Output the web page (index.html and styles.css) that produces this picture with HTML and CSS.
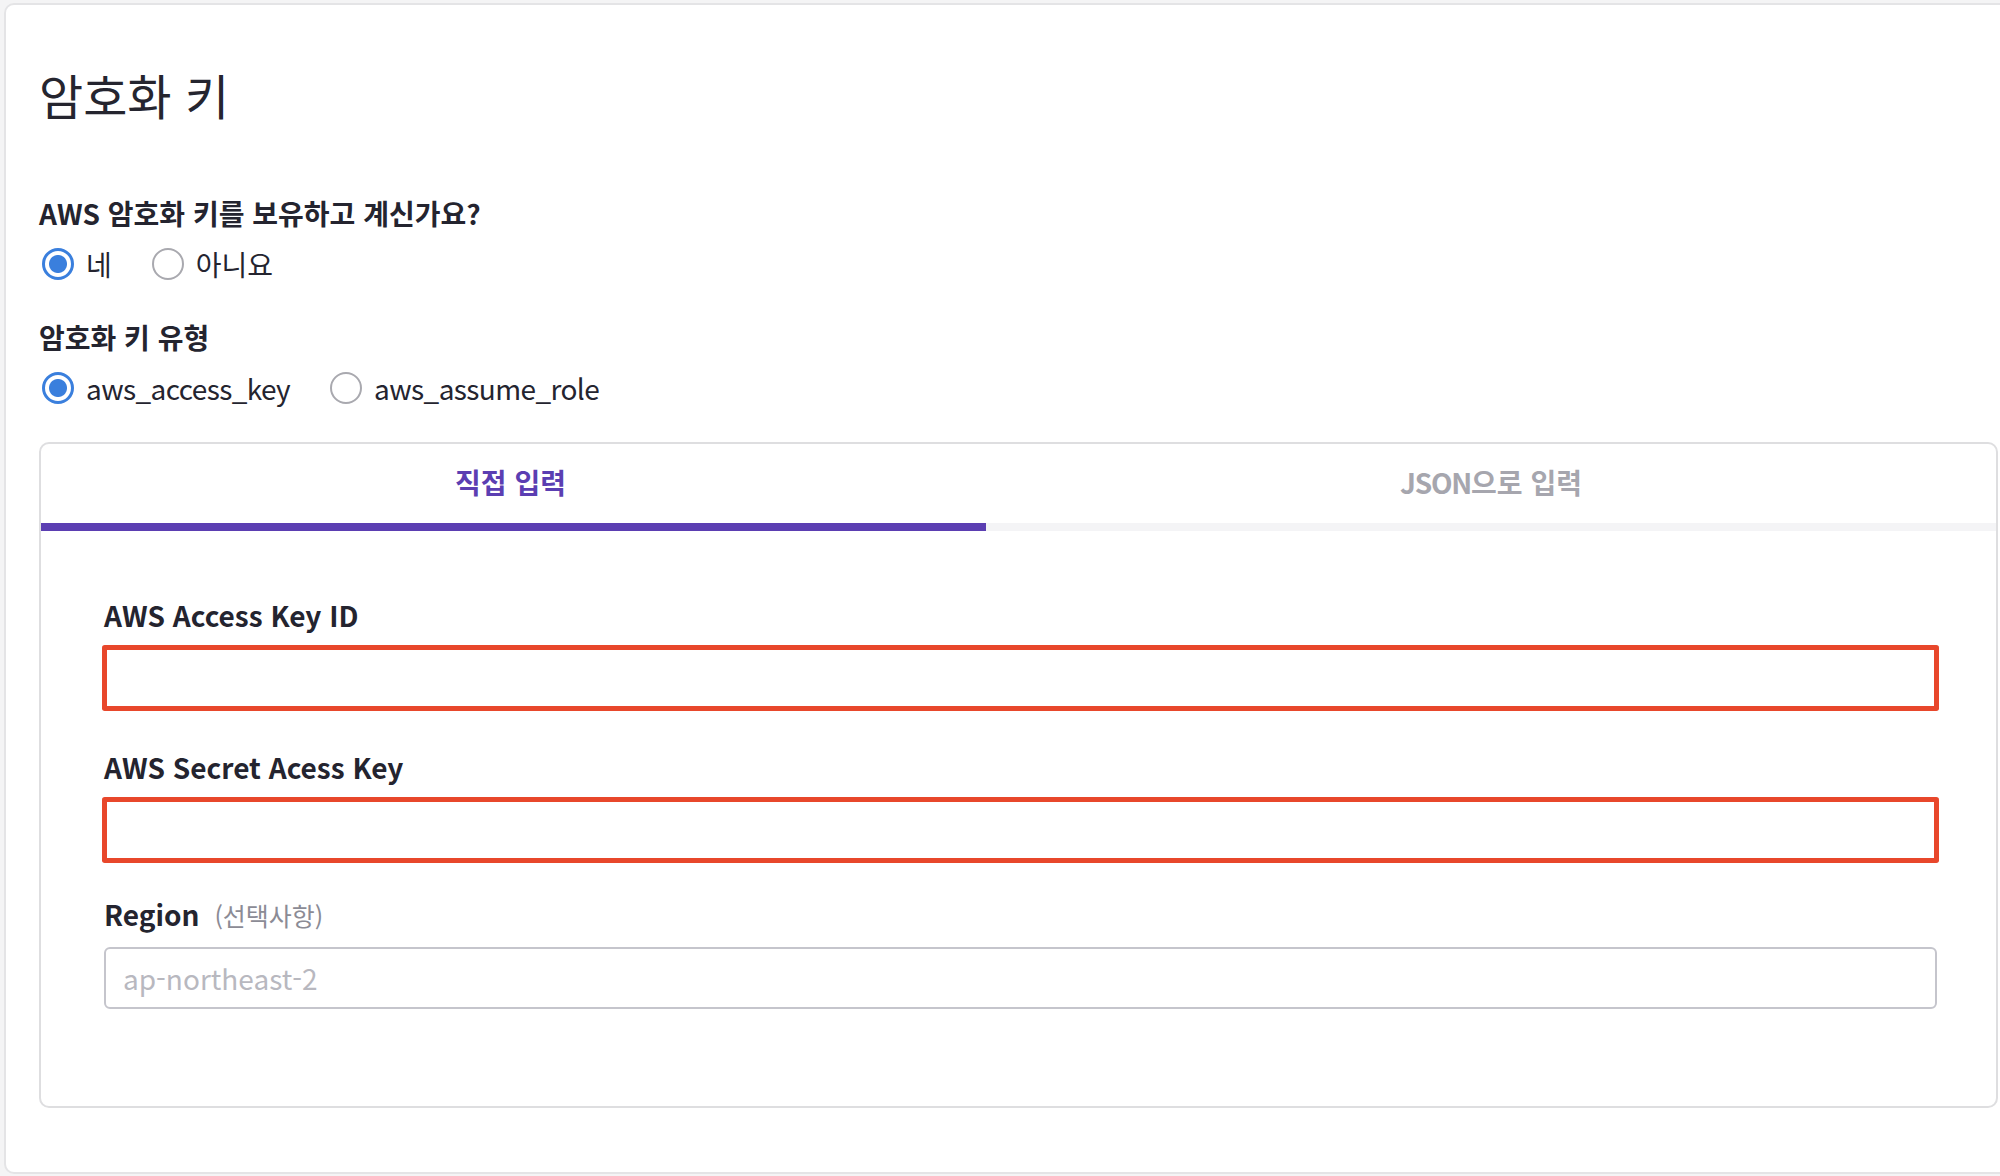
FILE: index.html
```html
<!DOCTYPE html>
<html lang="ko">
<head>
<meta charset="utf-8">
<title>암호화 키</title>
<link rel="stylesheet" href="styles.css">
</head>
<body>
<div class="page">
  <section class="panel">
    <h1 class="title">암호화 키</h1>

    <div class="group">
      <div class="group-label">AWS 암호화 키를 보유하고 계신가요?</div>
      <div class="radio-row">
        <label class="option"><input type="radio" name="has" class="radio" checked><span>네</span></label>
        <label class="option"><input type="radio" name="has" class="radio"><span>아니요</span></label>
      </div>
    </div>

    <div class="group group-second">
      <div class="group-label">암호화 키 유형</div>
      <div class="radio-row">
        <label class="option"><input type="radio" name="type" class="radio" checked><span class="latin">aws_access_key</span></label>
        <label class="option"><input type="radio" name="type" class="radio"><span class="latin">aws_assume_role</span></label>
      </div>
    </div>

    <div class="card">
      <div class="tabs">
        <div class="tab active">직접 입력</div>
        <div class="tab"><span class="tab-latin">JSON</span>으로 입력</div>
      </div>
      <div class="fields">
        <div class="field">
          <label class="field-label">AWS Access Key ID</label>
          <input type="text" class="input error">
        </div>
        <div class="field field-second">
          <label class="field-label">AWS Secret Acess Key</label>
          <input type="text" class="input error">
        </div>
        <div class="field field-third">
          <label class="field-label">Region<span class="optional">(선택사항)</span></label>
          <input type="text" class="input" placeholder="ap-northeast-2">
        </div>
      </div>
    </div>
  </section>
</div>
</body>
</html>
```

FILE: styles.css
```css
* {
  box-sizing: border-box;
}

html, body {
  margin: 0;
  padding: 0;
  overflow: hidden;
  background: #f4f4f5;
}

body {
  font-family: "Noto Sans CJK KR", "Noto Sans", sans-serif;
  color: #24242f;
  font-size: 28px;
  line-height: 40px;
}

.page {
  padding: 3px 0 0 4px;
}

.panel {
  width: 2029px;
  background: #ffffff;
  border: 2px solid #e4e4e6;
  border-radius: 10px;
  padding: 57px 33px 64px 33px;
}

.title {
  margin: 0 0 67px 0;
  font-size: 48px;
  line-height: 64px;
  font-weight: 400;
  color: #25252f;
}

.group-label {
  font-weight: 700;
  font-size: 28px;
  line-height: 40px;
}

.group-second {
  margin-top: 33px;
}

.radio-row {
  display: flex;
  gap: 37px;
  margin-top: 11px;
}

.option {
  display: flex;
  align-items: center;
  gap: 12px;
  height: 40px;
  font-weight: 400;
}

.latin {
  letter-spacing: -0.6px;
}

.radio {
  appearance: none;
  -webkit-appearance: none;
  margin: 0 0 0 3px;
  width: 32px;
  height: 32px;
  border-radius: 50%;
  border: 2px solid #a9a9af;
  background: #ffffff;
  flex: none;
}

.radio:checked {
  border: 3px solid #3a7fdd;
  background: radial-gradient(circle, #3a7fdd 0 8.5px, #ffffff 9.5px);
}

.card {
  margin-top: 34px;
  border: 2px solid #dedee0;
  border-radius: 10px;
  background: #ffffff;
}

.tabs {
  display: flex;
}

.tab {
  flex: 1 1 auto;
  text-align: center;
  font-weight: 700;
  font-size: 28px;
  line-height: 40px;
  padding: 18px 0 21px;
  color: #a6a6ae;
  border-bottom: 8px solid #f4f4f6;
}

.tab-latin {
  letter-spacing: -1.2px;
}

.tab.active {
  color: #5b3eb2;
  border-bottom-color: #5b3eb2;
  padding-right: 6px;
}

.fields {
  padding: 64px 59px 97px 63px;
}

.field-second {
  margin-top: 38px;
}

.field-third {
  margin-top: 33px;
}

.field-label {
  display: block;
  font-weight: 700;
  font-size: 28px;
  line-height: 40px;
  margin-bottom: 12px;
}

.optional {
  font-weight: 400;
  font-size: 25px;
  color: #8b8b95;
  margin-left: 15px;
}

.input {
  display: block;
  width: 100%;
  height: 62px;
  border: 2px solid #c5c5cc;
  border-radius: 6px;
  padding: 0 17px;
  font-family: "Noto Sans CJK KR", "Noto Sans", sans-serif;
  font-size: 28px;
  color: #24242f;
  background: #ffffff;
  outline: none;
}

.input::placeholder {
  color: #b8b8bf;
}

.input.error {
  border: 3px solid #e8472b;
  border-radius: 1px;
  box-shadow: 0 0 0 2px #e8472b;
}
```
